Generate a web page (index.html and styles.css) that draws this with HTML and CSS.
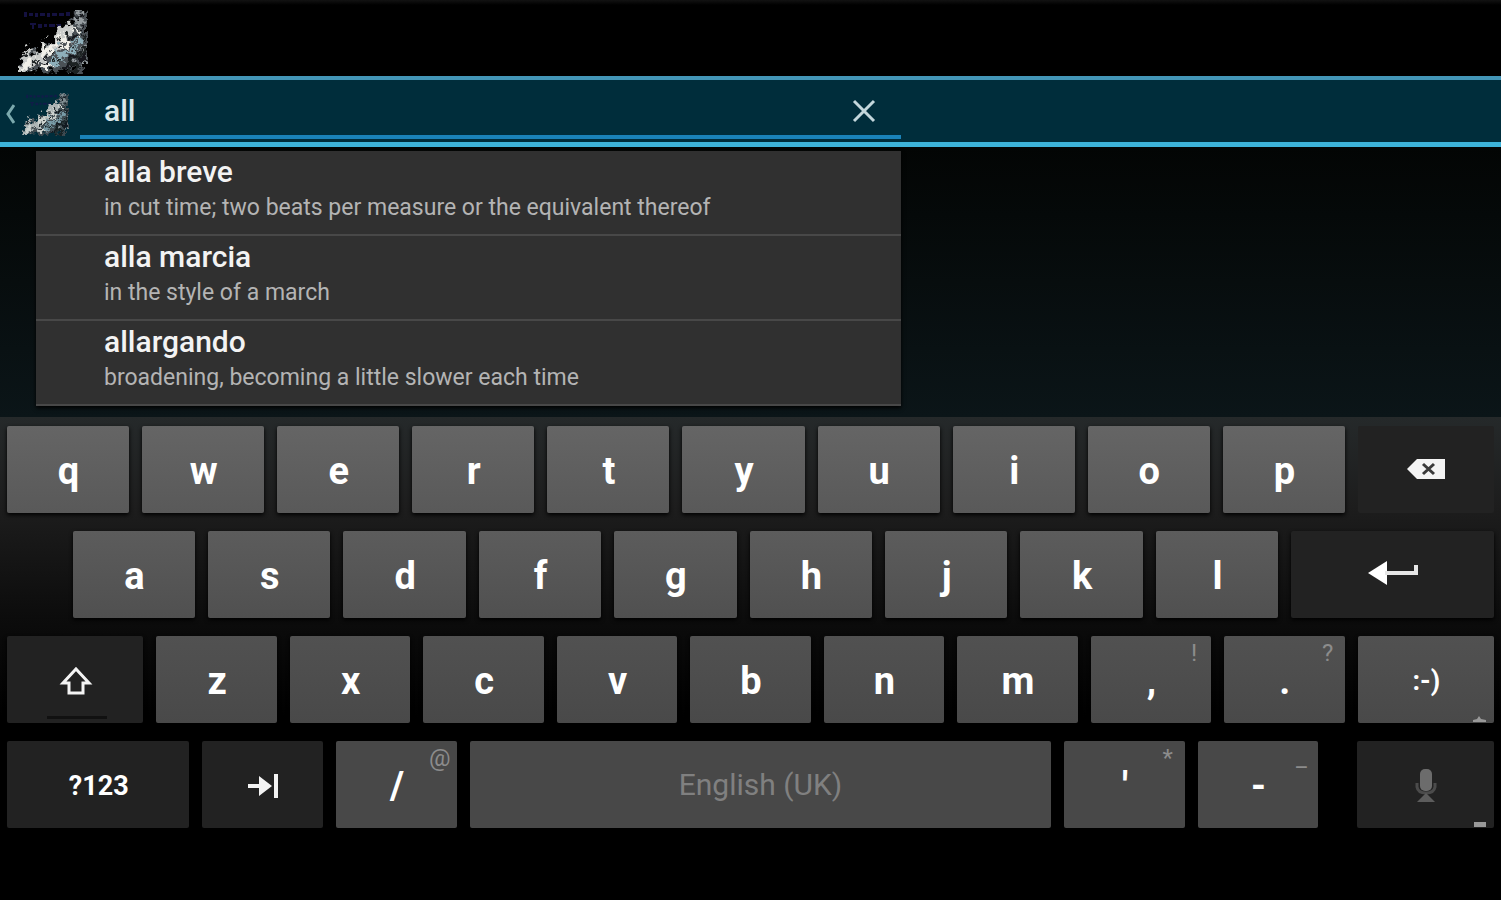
FILE: index.html
```
<!DOCTYPE html>
<html lang="en">
<head>
    <meta charset="utf-8">
    <title>Musical Terms</title>
    <meta content="width=device-width, initial-scale=1" name="viewport" />
    <link rel="stylesheet" href="styles.css">
</head>
<body>
    <svg class="defs" width="0" height="0" aria-hidden="true">
        <filter id="rough" x="0" y="0" width="100%" height="100%">
            <feTurbulence type="fractalNoise" baseFrequency="0.16" numOctaves="3" seed="4" result="noise" />
            <feDisplacementMap in="SourceGraphic" in2="noise" scale="16" xChannelSelector="R" yChannelSelector="G" />
            <feGaussianBlur stdDeviation="0.7" />
        </filter>
        <symbol id="logo" viewBox="0 0 70 66">
            <g fill="#1a1650" opacity="0.8">
                <path d="M6 4h3v5H6zM11 5h4v3h-4zM17 5h3v4h-3zM22 5h5v3h-5zM29 5h3v4h-3zM34 5h5v3h-5zM41 5h5v3h-5zM48 4h4v4h-4z" />
                <path d="M12 15h6v2h-2v4h-2v-4h-2zM20 16h4v4h-4zM26 16h3v3h-3zM31 16h6v3h-6zM39 16h4v3h-4z" />
            </g>
            <g filter="url(#rough)">
                <path fill="#4b5156" d="M0 65L3 50L12 39L22 46L29 32L34 39L45 17L51 21L56 6L70 2V52L62 65L45 60L38 66L20 62Z" />
                <path fill="#16191b" d="M57 9l8-3-3 8zM51 27l7 1-9 9zM48 51l11-7-3 8zM60 51l9-9-2 15zM41 60l9-4 5 5zM33 42l4 3-9 6zM10 53l9-5-6 9zM61 22l7-3-3 6zM21 55l9-4-2 7z" />
                <path fill="#c9cbc9" d="M0 65l5-18 5-9 4 8 7-3 5-13 5 9 6-8 4-11 6-1 5-6 4 9-9 9-5 10-9 5-8 9-10 3-9 9z" />
                <path fill="#f1f0e9" d="M2 64l6-13 9-2-5 9zM20 48l6-11 3 6 9-9-4 12-8 5zM40 33l5-9 4 2-4 12zM51 18l14 5-8 10 2-8zM23 59l8-6 3 8zM46 37l9-4-4 8z" />
                <path fill="#8eafba" d="M30 57l12-13 8-1-9 9-2 9zM42 49l14-12 7-3-8 11zM54 33l11-5-5 9zM35 41l6-3-3 8z" />
                <path fill="#979ea1" d="M56 12l8-2 5 5-7 3zM61 43l8-9v8zM52 56l9-5-5 12zM58 5l5-3 1 4zM64 57l4-9 1 8z" />
                <path fill="#1c2022" d="M6 48l3-5 2 6zM15 56l5-4-2 6zM27 41l2-5 3 6zM39 36l3-6 1 6zM47 30l2-7 3 3zM55 40l4-3-1 5zM36 54l4-4-1 5zM64 30l4-3-2 8zM56 46l12-8 1 4-10 9zM46 55l10-3 8 6-6 6z" />
            </g>
        </symbol>
    </svg>

    <header class="title-bar">
        <svg class="app-logo" role="img" aria-label="Musical Terms"><use href="#logo" /></svg>
    </header>

    <form class="search-bar">
        <button class="up" type="button" aria-label="Back">
            <svg class="chevron" viewBox="0 0 10 20"><path d="M9 1L3 10L9 19" /></svg>
            <svg class="up-logo"><use href="#logo" /></svg>
        </button>
        <div class="search-field">
            <input class="search-input" type="text" value="all" aria-label="Search" />
            <button class="clear" type="button" aria-label="Clear">
                <svg viewBox="0 0 24 24"><path d="M2 2L22 22M22 2L2 22" /></svg>
            </button>
        </div>
    </form>

    <main class="content">
        <ul class="suggestions">
            <li class="suggestion">
                <div class="term">alla breve</div>
                <div class="meaning">in cut time; two beats per measure or the equivalent thereof</div>
            </li>
            <li class="suggestion">
                <div class="term">alla marcia</div>
                <div class="meaning">in the style of a march</div>
            </li>
            <li class="suggestion">
                <div class="term">allargando</div>
                <div class="meaning">broadening, becoming a little slower each time</div>
            </li>
        </ul>
    </main>

    <div class="keyboard">
        <div class="row row-1">
            <button class="key wide-letter">q</button>
            <button class="key wide-letter">w</button>
            <button class="key wide-letter">e</button>
            <button class="key wide-letter">r</button>
            <button class="key wide-letter">t</button>
            <button class="key wide-letter">y</button>
            <button class="key wide-letter">u</button>
            <button class="key wide-letter">i</button>
            <button class="key wide-letter">o</button>
            <button class="key wide-letter">p</button>
            <button class="key dark side" aria-label="Delete">
                <svg width="40" height="28" viewBox="0 0 40 28">
                    <path fill="#f4f4f4" d="M1 12L11 2H39V22H11Z" />
                    <path stroke="#3a3a3a" stroke-width="3" d="M17 7L28 17M28 7L17 17" />
                </svg>
            </button>
        </div>
        <div class="row row-2">
            <div class="indent"></div>
            <button class="key wide-letter">a</button>
            <button class="key wide-letter">s</button>
            <button class="key wide-letter">d</button>
            <button class="key wide-letter">f</button>
            <button class="key wide-letter">g</button>
            <button class="key wide-letter">h</button>
            <button class="key wide-letter">j</button>
            <button class="key wide-letter">k</button>
            <button class="key wide-letter">l</button>
            <button class="key dark enter" aria-label="Enter">
                <svg width="52" height="36" viewBox="0 0 52 36">
                    <path fill="#fff" d="M1 15L20 3V27Z" />
                    <path fill="none" stroke="#e6e6e6" stroke-width="4" d="M18 15H49V7" />
                </svg>
            </button>
        </div>
        <div class="row row-3">
            <button class="key dark side" aria-label="Shift">
                <svg width="34" height="30" viewBox="0 0 34 30">
                    <path fill="none" stroke="#f4f4f4" stroke-width="3" d="M17 3L30 17H24V27H10V17H4Z" />
                </svg>
                <span class="shift-lock"></span>
            </button>
            <button class="key letter">z</button>
            <button class="key letter">x</button>
            <button class="key letter">c</button>
            <button class="key letter">v</button>
            <button class="key letter">b</button>
            <button class="key letter">n</button>
            <button class="key letter">m</button>
            <button class="key letter">,<span class="hint">!</span></button>
            <button class="key letter">.<span class="hint">?</span></button>
            <button class="key side small">:-)<svg class="more" viewBox="0 0 14 6"><path d="M0 4L4 3L6 0L8 3L13 4V6H0Z" /></svg></button>
        </div>
        <div class="row row-4">
            <button class="key dark symbols small">?123</button>
            <button class="key dark letter" aria-label="Tab">
                <svg width="32" height="28" viewBox="0 0 32 28">
                    <path fill="#f4f4f4" d="M1 12H12V4L25 14L12 24V16H1ZM27 2H31V26H27Z" />
                </svg>
            </button>
            <button class="key letter">/<span class="hint">@</span></button>
            <button class="key space">English (UK)</button>
            <button class="key letter">'<span class="hint">*</span></button>
            <button class="key letter">-<span class="hint">_</span></button>
            <div class="notch"></div>
            <button class="key dark side" aria-label="Voice input">
                <svg width="22" height="36" viewBox="0 0 22 36">
                    <rect fill="#6c6c6c" x="5" y="1" width="12" height="22" rx="5" />
                    <path fill="none" stroke="#4b4b4b" stroke-width="3" d="M2 15V19Q3 25 11 25Q19 25 20 19V15" />
                    <path fill="#5c5c5c" d="M11 25L20 34H2Z" />
                </svg>
                <svg class="more" viewBox="0 0 14 6"><path d="M1 1H13V6H1Z" /></svg>
            </button>
        </div>
    </div>
</body>
</html>
```
FILE: styles.css
```
* {
    box-sizing: border-box;
}
body {
    display: flex;
    flex-direction: column;
    min-height: 100vh;
    margin: 0;
    background: #000;
    color: #f3f3f3;
    font-family: Roboto, sans-serif;
}
button {
    padding: 0;
    border: 0;
    background: none;
    color: inherit;
    font-family: inherit;
}
.defs {
    position: absolute;
}
.title-bar {
    display: flex;
    height: 76px;
    padding: 8px 18px 0;
    background: linear-gradient(#121212, #000 5px);
}
.app-logo {
    width: 70px;
    height: 66px;
}
.search-bar {
    display: flex;
    height: 71px;
    border-top: 4px solid #4396b7;
    border-bottom: 5px solid #3db3d9;
    background: #002d3b;
}
.up {
    display: flex;
    align-items: center;
    width: 80px;
    padding: 6px 0 0 5px;
    gap: 7px;
}
.chevron {
    width: 10px;
    height: 20px;
    fill: none;
    stroke: #7ba9ad;
    stroke-width: 3;
}
.up-logo {
    width: 47px;
    height: 44px;
    opacity: 0.85;
}
.search-field {
    display: flex;
    align-items: center;
    flex: 0 1 821px;
    height: 59px;
    padding: 6px 25px 0 24px;
    border-bottom: 4px solid #1a82b8;
}
.search-input {
    flex: 1;
    min-width: 0;
    padding: 0;
    border: 0;
    outline: 0;
    background: none;
    color: #dde9eb;
    font-family: inherit;
    font-size: 30px;
    font-weight: 500;
}
.clear svg {
    display: block;
    width: 24px;
    height: 24px;
    stroke: #c3d7dc;
    stroke-width: 3;
}
.content {
    height: 270px;
    padding: 4px 0 0 36px;
    background: linear-gradient(#030504, #0b1518);
}
.suggestions {
    max-width: 865px;
    margin: 0;
    padding: 0;
    background: #303030;
    box-shadow: 0 2px 4px #000;
    list-style: none;
}
.suggestion {
    height: 85px;
    padding: 3px 68px 0;
    border-bottom: 2px solid #484848;
}
.term {
    font-size: 30px;
    font-weight: 500;
    line-height: 36px;
}
.meaning {
    color: #b4b4b4;
    font-size: 23px;
    line-height: 36px;
}
.keyboard {
    display: flex;
    flex: 1;
    flex-direction: column;
    gap: 18px;
    padding: 9px 7px 0;
    background: linear-gradient(#25292a, #1d1d1d 90px, #0c0c0c 200px, #000 300px);
}
.row {
    display: flex;
    gap: 13px;
    height: 87px;
}
.key {
    position: relative;
    display: flex;
    align-items: center;
    justify-content: center;
    padding: 3px 0 0 1px;
    border-radius: 2px;
    box-shadow: 0 2px 4px #000;
    color: #fff;
    font-size: 38px;
    font-weight: 700;
}
.row-1 .key {
    background: linear-gradient(#656565, #595959);
}
.row-2 .key {
    background: linear-gradient(#5c5c5c, #505050);
}
.row-3 .key {
    background: linear-gradient(#515151, #494949);
}
.row-4 .key {
    background: #484848;
}
.row .dark {
    background: #222;
}
.row-1 .dark {
    box-shadow: none;
}
.wide-letter {
    flex: 122;
}
.letter {
    flex: 120;
}
.side {
    flex: 136;
}
.enter {
    flex: 203;
}
.symbols {
    flex: 182;
}
.space {
    flex: 583;
}
.indent {
    flex: 53;
}
.notch {
    flex: 13;
}
.row .small {
    font-size: 27px;
}
.row .space {
    padding: 0;
    color: #808080;
    font-size: 30px;
    font-weight: 400;
}
.hint {
    position: absolute;
    top: 3px;
    right: 6px;
    width: 22px;
    color: #8c8c8c;
    font-size: 24px;
    font-weight: 400;
    line-height: 28px;
    text-align: center;
}
.more {
    position: absolute;
    right: 7px;
    bottom: 1px;
    width: 14px;
    height: 6px;
    fill: #999;
}
.shift-lock {
    position: absolute;
    bottom: 4px;
    left: 40px;
    width: 60px;
    height: 3px;
    background: #111;
}
```
